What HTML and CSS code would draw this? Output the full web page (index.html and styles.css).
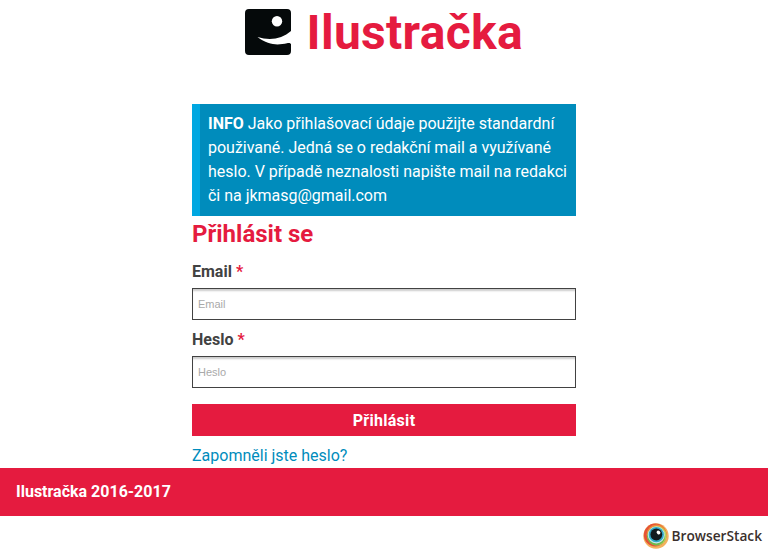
FILE: index.html
```html
<!DOCTYPE html>
<html lang="cs">
<head>
<meta charset="utf-8">
<title>Ilustračka</title>
<link rel="stylesheet" href="styles.css">
</head>
<body>
<header class="header">
  <svg class="logo" viewBox="0 0 46 46" aria-hidden="true">
    <path fill="#05090a" d="M4 0H42Q46 0 46 4V22C37 30 25 32 12.500 28C24 37 34 36 42 34.200C44 33.600 45.400 34 46 35V42Q46 46 42 46H4Q0 46 0 42V4Q0 0 4 0Z"/>
    <circle cx="32" cy="12.300" r="5.200" fill="#fff"/>
  </svg>
  <h1 class="title">Ilustračka</h1>
</header>
<main class="main">
  <p class="info"><strong>INFO</strong> Jako přihlašovací údaje použijte standardní použivané. Jedná se o redakční mail a využívané heslo. V případě neznalosti napište mail na redakci či na jkmasg@gmail.com</p>
  <h2 class="heading">Přihlásit se</h2>
  <form class="form">
    <label class="label" for="email">Email <span class="required">*</span></label>
    <input class="input" id="email" type="email" placeholder="Email">
    <label class="label" for="password">Heslo <span class="required">*</span></label>
    <input class="input" id="password" type="password" placeholder="Heslo">
    <button class="submit" type="button">Přihlásit</button>
  </form>
  <a class="forgot" href="#">Zapomněli jste heslo?</a>
</main>
<footer class="footer">Ilustračka 2016-2017</footer>
<div class="partner">
  <svg class="partner-icon" viewBox="0 0 26 26" aria-hidden="true">
    <circle cx="13" cy="13" r="12.700" fill="#f3b15e"/>
    <circle cx="12.200" cy="12" r="11.400" fill="#e55336"/>
    <circle cx="13.600" cy="11.600" r="10" fill="#ee8b3c"/>
    <circle cx="14" cy="12.800" r="9.700" fill="#b9d45a"/>
    <circle cx="13.100" cy="13.500" r="9" fill="#70b84c"/>
    <circle cx="13.300" cy="12" r="8.500" fill="#c9e9ed"/>
    <circle cx="13.300" cy="11.700" r="7.600" fill="#30aac8"/>
    <circle cx="13.300" cy="11.500" r="5.900" fill="#121a1f"/>
    <ellipse cx="15.500" cy="9.500" rx="2" ry="1.700" fill="#fff" transform="rotate(35 15.500 9.500)"/>
  </svg>
  <span class="partner-name">BrowserStack</span>
</div>
</body>
</html>
```
FILE: styles.css
```css
* {
  box-sizing: border-box;
}

body {
  margin: 0;
  background: #fff;
  color: #424242;
  font: 16px/24px Roboto, sans-serif;
}

h1,
h2,
p {
  margin: 0;
}

.header {
  display: flex;
  justify-content: center;
  gap: 15.500px;
  height: 104px;
}

.logo {
  width: 46px;
  height: 46px;
  margin-top: 9px;
}

.title {
  color: #e51b3f;
  font-size: 48px;
  font-weight: 700;
  letter-spacing: 0.3px;
  line-height: 65px;
}

.main {
  width: 384px;
  height: 364px;
  margin: 0 auto;
}

.info {
  padding: 8px;
  border-left: 8px solid #00a7e1;
  background: #008cbc;
  color: #fff;
  letter-spacing: -0.015px;
}

.heading {
  color: #e51b3f;
  font-size: 24px;
  font-weight: 700;
  line-height: 36px;
}

.form {
  display: flex;
  flex-direction: column;
  padding-top: 8px;
}

.label {
  font-weight: 700;
  margin-bottom: 4px;
}

.required {
  color: #e51b3f;
}

.input {
  height: 32px;
  margin: 0 0 8px;
  padding: 0 5px;
  border: 1px solid #424242;
  background: #fff;
  box-shadow: inset 0 3px 2px -1px #ccc;
  font: 11px "Liberation Sans", sans-serif;
}

.input::placeholder {
  color: #a9a9a9;
}

.submit {
  height: 32px;
  margin: 8px 0;
  padding: 1px 0 0;
  border: 0;
  background: #e51b3f;
  color: #fff;
  font: 700 16px/32px Roboto, sans-serif;
  letter-spacing: 0.3px;
}

.forgot {
  display: block;
  color: #008cbc;
  text-decoration: none;
}

.footer {
  height: 48px;
  padding: 0 16px;
  background: #e51b3f;
  color: #fff;
  font-weight: 700;
  line-height: 48px;
}

.partner {
  display: flex;
  justify-content: flex-end;
  align-items: center;
  gap: 3px;
  height: 39px;
  padding-right: 6px;
}

.partner-icon {
  width: 26px;
  height: 26px;
}

.partner-name {
  color: #3b302d;
  font: 600 13.700px/26px "Open Sans", sans-serif;
}
```
